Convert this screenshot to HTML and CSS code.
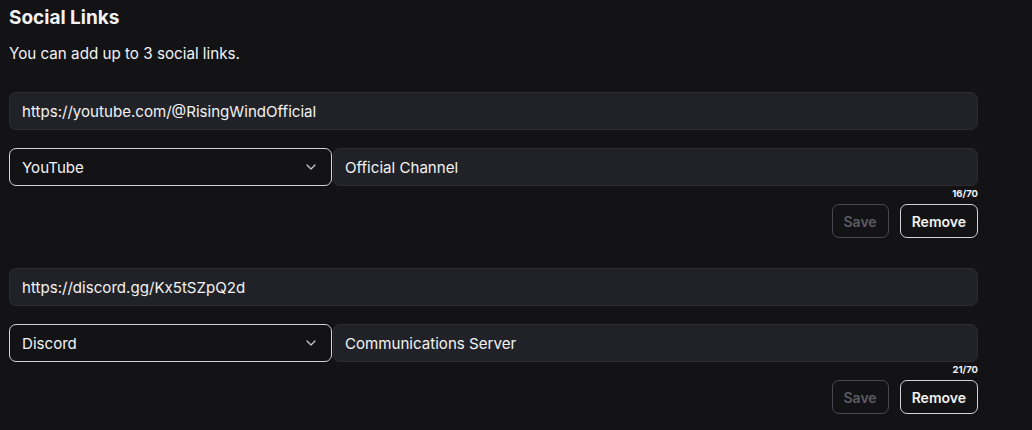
FILE: index.html
```html
<!DOCTYPE html>
<html lang="en">

<head>
    <meta charset="UTF-8">
    <meta name="viewport" content="width=device-width, initial-scale=1.0">
    <title>Social Links</title>
    <link rel="stylesheet" href="styles.css">
</head>

<body>
    <div class="social">
        <h2 class="social-title">Social Links</h2>
        <p class="social-hint">You can add up to 3 social links.</p>

        <div class="link-item">
            <input class="field url" type="text" value="https://youtube.com/@RisingWindOfficial">
            <div class="link-row">
                <div class="select-wrap">
                    <select class="picker">
                        <option selected>YouTube</option>
                        <option>Discord</option>
                    </select>
                    <svg class="chevron" width="10" height="6" viewBox="0 0 10 6">
                        <path d="M1 1l4 4 4-4" fill="none" stroke="#c8c8cc" stroke-width="1.3" stroke-linecap="round" stroke-linejoin="round" />
                    </svg>
                </div>
                <input class="field label" type="text" value="Official Channel">
            </div>
            <div class="counter">16/70</div>
            <div class="actions">
                <button class="btn" disabled>Save</button>
                <button class="btn">Remove</button>
            </div>
        </div>

        <div class="link-item">
            <input class="field url" type="text" value="https://discord.gg/Kx5tSZpQ2d">
            <div class="link-row">
                <div class="select-wrap">
                    <select class="picker">
                        <option>YouTube</option>
                        <option selected>Discord</option>
                    </select>
                    <svg class="chevron" width="10" height="6" viewBox="0 0 10 6">
                        <path d="M1 1l4 4 4-4" fill="none" stroke="#c8c8cc" stroke-width="1.3" stroke-linecap="round" stroke-linejoin="round" />
                    </svg>
                </div>
                <input class="field label" type="text" value="Communications Server">
            </div>
            <div class="counter">21/70</div>
            <div class="actions">
                <button class="btn" disabled>Save</button>
                <button class="btn">Remove</button>
            </div>
        </div>
    </div>
</body>

</html>
```

FILE: styles.css
```css
* {
    padding: 0;
    margin: 0;
    box-sizing: border-box;
}

body {
    background-color: #131316;
    color: #f2f2f4;
    font-family: Inter, "Noto Sans", sans-serif;
}

.social {
    width: 969px;
    margin-left: 9px;
}

.social-title {
    margin-top: 7px;
    font-size: 19px;
    font-weight: 700;
    line-height: 22px;
}

.social-hint {
    margin-top: 15px;
    font-size: 15.2px;
    line-height: 20px;
}

.link-item {
    display: flex;
    flex-direction: column;
    margin-top: 28px;
}

.link-item + .link-item {
    margin-top: 30px;
}

.field {
    height: 38px;
    padding: 0 12px;
    background-color: #212227;
    border: 1px solid #2c2d33;
    border-radius: 7px;
    color: #f2f2f4;
    font: 15.1px Inter, "Noto Sans", sans-serif;
    outline: none;
}

.link-row {
    display: flex;
    gap: 1px;
    margin-top: 18px;
}

.select-wrap {
    position: relative;
    width: 323px;
}

.picker {
    appearance: none;
    width: 100%;
    height: 38px;
    padding: 0 12px;
    background-color: #131316;
    border: 1px solid #d4d4d8;
    border-radius: 7px;
    color: #f2f2f4;
    font: 15.1px Inter, "Noto Sans", sans-serif;
    outline: none;
}

.chevron {
    position: absolute;
    right: 16px;
    top: 16px;
    pointer-events: none;
}

.label {
    flex: 1;
    padding-left: 11px;
}

.counter {
    align-self: flex-end;
    margin-top: 2px;
    font-size: 9.5px;
    font-weight: 700;
    line-height: 12px;
}

.actions {
    display: flex;
    justify-content: flex-end;
    gap: 11px;
    margin-top: 4px;
}

.btn {
    height: 34px;
    padding: 0 11px;
    background: transparent;
    border: 1px solid #d4d4d8;
    border-radius: 7px;
    color: #f2f2f4;
    font: 600 14px Inter, "Noto Sans", sans-serif;
    cursor: pointer;
}

.btn:disabled {
    border-color: #4a4a50;
    color: #5c5c62;
    cursor: default;
}
```
